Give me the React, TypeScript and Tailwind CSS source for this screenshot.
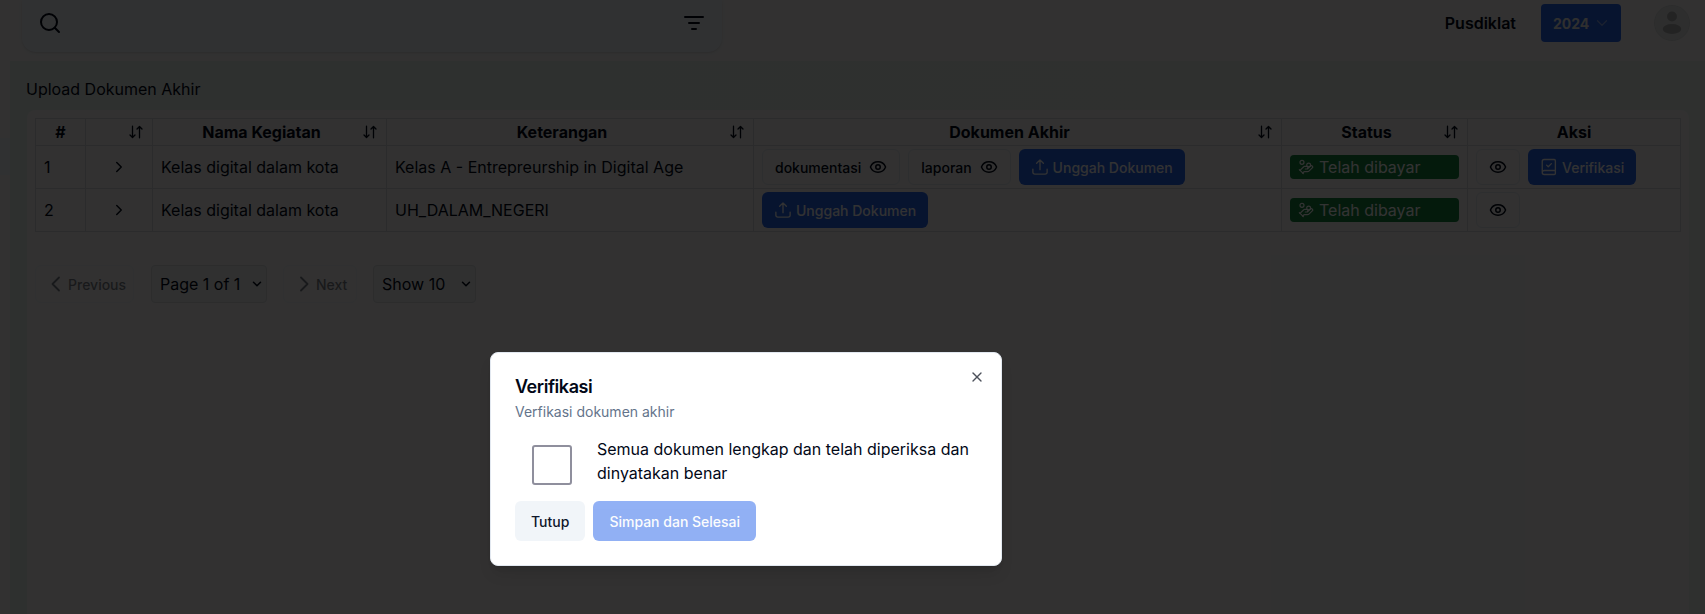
import React from "react";
import { HandCoins, Eye, X, ChevronRight, ChevronDown } from "lucide-react";

function SortIcon() {
  return (
    <svg className="h-4 w-4 shrink-0" viewBox="0 0 16 16" fill="none" stroke="currentColor" strokeWidth="1.3" strokeLinecap="round" strokeLinejoin="round">
      <path d="M4.5 2.2v11.2M2 11l2.5 2.5L7 11M11.5 13.8V2.6M9 5l2.5-2.5L14 5" />
    </svg>
  );
}

function UploadIcon() {
  return (
    <svg className="h-[18px] w-[18px] shrink-0" viewBox="0 0 24 24" fill="none" stroke="currentColor" strokeWidth="1.8" strokeLinecap="round" strokeLinejoin="round">
      <path d="M2.5 15v4a2.5 2.5 0 0 0 2.5 2.5h14a2.5 2.5 0 0 0 2.5-2.5v-4" />
      <path d="M7.5 7 12 2.5 16.5 7M12 2.5v13" />
    </svg>
  );
}

function BookCheckIcon() {
  return (
    <svg className="h-[18px] w-[18px] shrink-0" viewBox="0 0 24 24" fill="none" stroke="currentColor" strokeWidth="1.8" strokeLinecap="round" strokeLinejoin="round">
      <path d="M3 19V4.5A2.5 2.5 0 0 1 5.5 2H19a1.5 1.5 0 0 1 1.5 1.5v17A1.5 1.5 0 0 1 19 22H5.7A2.7 2.7 0 0 1 3 19.3a2.7 2.7 0 0 1 2.7-2.7h14.8" />
      <path d="m8.8 9.5 2.2 2.2 4.2-4.2" />
    </svg>
  );
}

const blueButton =
  "flex h-9 items-center rounded-md bg-[#2563eb] px-3 text-sm font-medium text-[#f8fafc]";
const outlineButton =
  "flex h-9 items-center rounded-md border border-[#e2e6ec] px-3 text-sm font-medium";

function UploadButton() {
  return (
    <button className={blueButton}>
      <UploadIcon />
      <span className="ml-1 pt-0.5">Unggah Dokumen</span>
    </button>
  );
}

const columns = [
  { label: "#", sort: false },
  { label: "", sort: true },
  { label: "Nama Kegiatan", sort: true },
  { label: "Keterangan", sort: true },
  { label: "Dokumen Akhir", sort: true },
  { label: "Status", sort: true },
  { label: "Aksi", sort: false },
];

const rows = [
  { id: 1, name: "Kelas digital dalam kota", note: "Kelas A - Entrepreurship in Digital Age", docs: ["dokumentasi", "laporan"], verify: true },
  { id: 2, name: "Kelas digital dalam kota", note: "UH_DALAM_NEGERI", docs: [], verify: false },
];

const cell = "h-[43px] border-r border-b border-[#d6d7da] px-2 py-0 align-middle";

function DocumentTable() {
  return (
    <table className="w-[1646px] table-fixed border-separate border-spacing-0 border-t border-l border-[#d6d7da]">
      <colgroup>
        <col className="w-[50px]" />
        <col className="w-[67px]" />
        <col className="w-[234px]" />
        <col className="w-[367px]" />
        <col className="w-[528px]" />
        <col className="w-[186px]" />
        <col className="w-[213px]" />
      </colgroup>
      <thead>
        <tr>
          {columns.map((c, i) => (
            <th key={i} className="h-[27px] border-r border-b border-[#d6d7da] px-2 py-0 font-bold">
              <div className="flex h-[26px] items-center">
                <span className="flex-1 text-center">{c.label}</span>
                {c.sort && <SortIcon />}
              </div>
            </th>
          ))}
        </tr>
      </thead>
      <tbody>
        {rows.map((r) => (
          <tr key={r.id}>
            <td className={cell}>{r.id}</td>
            <td className={cell}>
              <ChevronRight className="mx-auto h-[18px] w-[18px]" strokeWidth={1.9} />
            </td>
            <td className={cell}>{r.name}</td>
            <td className={cell}>{r.note}</td>
            <td className={cell}>
              <div className="flex gap-2">
                {r.docs.map((d) => (
                  <button key={d} className={outlineButton}>
                    <span className="pt-0.5">{d}</span>
                    <Eye className="ml-2 h-[18px] w-[18px]" />
                  </button>
                ))}
                <UploadButton />
              </div>
            </td>
            <td className={cell}>
              <div className="flex h-6 items-center gap-[5px] rounded bg-[#15803d] px-2 text-white">
                <HandCoins className="h-4 w-4" strokeWidth={1.8} />
                <span>Telah dibayar</span>
              </div>
            </td>
            <td className={cell}>
              <div className="flex gap-2">
                <button className={outlineButton}>
                  <Eye className="h-[18px] w-[18px]" />
                </button>
                {r.verify && (
                  <button className={blueButton}>
                    <BookCheckIcon />
                    <span className="ml-1 pt-0.5">Verifikasi</span>
                  </button>
                )}
              </div>
            </td>
          </tr>
        ))}
      </tbody>
    </table>
  );
}

const selectBox =
  "flex h-[38px] items-center justify-between rounded border border-[#d9dadd] bg-[#f0f0f0] pr-[2px] pl-2";

function Pagination() {
  return (
    <div className="mt-[33px] flex h-[38px] items-center">
      <button className="flex h-[38px] w-[99px] items-center rounded-md border border-[#eef0f2] pl-[10px] text-sm font-medium">
        <span className="flex items-center opacity-50">
          <svg className="h-5 w-5" viewBox="0 0 20 20" fill="none" stroke="currentColor" strokeWidth="1.8" strokeLinecap="round" strokeLinejoin="round">
            <path d="M13 3.5 6.5 10l6.5 6.5" />
          </svg>
          <span className="ml-[2px] pt-0.5">Previous</span>
        </span>
      </button>
      <div className={`ml-[17px] w-[116px] ${selectBox}`}>
        <span>Page 1 of 1</span>
        <ChevronDown className="h-[14px] w-[14px]" strokeWidth={2.6} />
      </div>
      <button className="ml-4 flex h-[38px] w-[74px] items-center rounded-md border border-[#eef0f2] pl-[9px] text-sm font-medium">
        <span className="flex items-center opacity-50">
          <svg className="h-5 w-5" viewBox="0 0 20 20" fill="none" stroke="currentColor" strokeWidth="1.8" strokeLinecap="round" strokeLinejoin="round">
            <path d="m8 3.5 6.5 6.5L8 16.5" />
          </svg>
          <span className="ml-[3px] pt-0.5">Next</span>
        </span>
      </button>
      <div className={`ml-4 w-[103px] ${selectBox}`}>
        <span>Show 10</span>
        <ChevronDown className="h-[14px] w-[14px]" strokeWidth={2.6} />
      </div>
    </div>
  );
}

function Header() {
  return (
    <header className="flex h-[61px] items-start pl-[22px]">
      <div className="flex h-[52px] w-[700px] items-start justify-between rounded-b-[14px] bg-[#f0f4fb] px-4 pt-[11px] shadow-sm">
        <svg className="h-6 w-6" viewBox="0 0 24 24" fill="none" stroke="currentColor" strokeWidth="2" strokeLinecap="round" strokeLinejoin="round">
          <circle cx="11" cy="11" r="8" />
          <path d="m21 21-4.3-4.3" />
        </svg>
        <svg className="h-6 w-6" viewBox="0 0 24 24" fill="none" stroke="currentColor" strokeWidth="2" strokeLinecap="round">
          <path d="M3 6h18M7 12h10M10 18h4" />
        </svg>
      </div>
      <div className="ml-auto flex h-[46px] items-center pr-[15px]">
        <span className="font-semibold">Pusdiklat</span>
        <button className="ml-[25px] flex h-[38px] w-20 items-center rounded bg-[#2563eb] pl-3 text-sm font-bold text-[#e8e8e8]">
          <span className="pt-0.5">2024</span>
          <ChevronDown className="ml-1 h-[18px] w-[18px] opacity-50" strokeWidth={1.6} />
        </button>
        <svg className="ml-[33px] h-9 w-9" viewBox="0 0 36 36">
          <circle cx="18" cy="18" r="17.5" fill="#e6e6e6" stroke="#dcdcdc" />
          <circle cx="18" cy="11.5" r="5" fill="#b0b0b0" />
          <ellipse cx="18" cy="24" rx="9.3" ry="5" fill="#b0b0b0" />
        </svg>
      </div>
    </header>
  );
}

function VerificationDialog() {
  return (
    <div role="dialog" className="absolute top-[352px] left-[490px] h-[214px] w-[512px] rounded-lg border border-[#e2e8f0] bg-white px-6 pt-[25px] shadow-lg">
      <div className="flex items-start justify-between">
        <h2 className="text-lg leading-none font-semibold tracking-tight">Verifikasi</h2>
        <X className="-mt-[9px] -mr-2 h-4 w-4 opacity-70" />
      </div>
      <p className="mt-1.5 text-sm text-[#64748b]">Verfikasi dokumen akhir</p>
      <div className="mt-[15px] flex h-12">
        <span className="mt-2 ml-[17px] h-10 w-10 shrink-0 rounded-[3px] border-2 border-[#8f8f9d]" />
        <p className="ml-[25px] w-[390px]">Semua dokumen lengkap dan telah diperiksa dan dinyatakan benar</p>
      </div>
      <div className="mt-4 flex gap-2">
        <button className="h-10 rounded-md bg-[#f1f5f9] px-4 pt-0.5 text-sm font-medium text-[#0f172a]">Tutup</button>
        <button className="h-10 rounded-md bg-[#2563eb] px-4 pt-0.5 text-sm font-medium text-[#f8fafc] opacity-50">Simpan dan Selesai</button>
      </div>
    </div>
  );
}

export default function App() {
  return (
    <div className="relative h-[614px] w-[1705px] overflow-hidden bg-[#f7f6f6] font-[Inter,sans-serif] text-base text-[#020817]">
      <Header />
      <div className="flex h-[553px]">
        <aside className="w-[10px] shrink-0 pt-[77px]">
          <div className="h-[37px] bg-[#eff3f7]" />
        </aside>
        <main className="w-[1695px] bg-linear-to-r from-[#e6eeea] to-[#e9eeeb] px-4 pt-4">
          <h1 className="h-[33px] leading-6">Upload Dokumen Akhir</h1>
          <section className="ml-[1px] h-[520px] w-[1662px] rounded-lg bg-[#f7f6f6] px-2 pt-2">
            <DocumentTable />
            <Pagination />
          </section>
        </main>
      </div>
      <div className="absolute inset-0 bg-black/80" />
      <VerificationDialog />
    </div>
  );
}
